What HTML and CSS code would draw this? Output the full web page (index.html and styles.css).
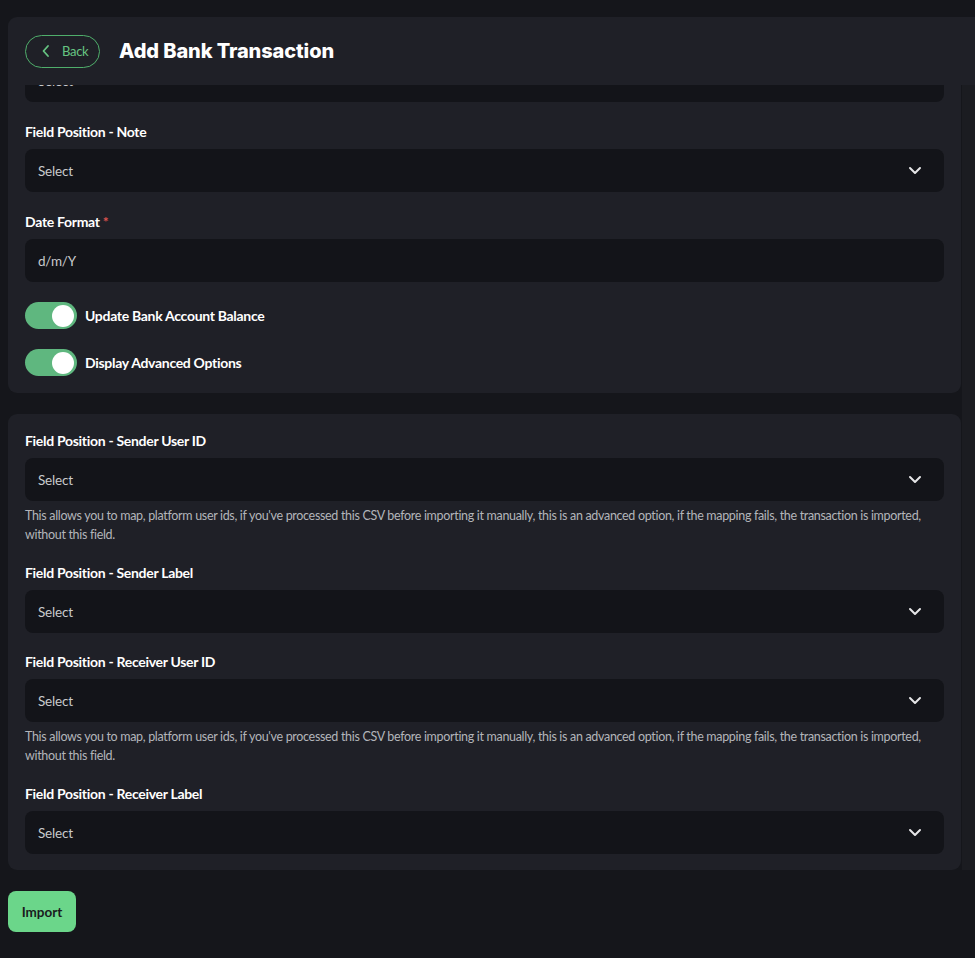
FILE: index.html
```html
<!DOCTYPE html>
<html lang="en">
<head>
<meta charset="utf-8">
<title>Add Bank Transaction</title>
<link rel="stylesheet" href="styles.css">
</head>
<body>
<div class="page">
  <header class="topbar">
    <button class="back-btn" type="button">
      <svg class="back-icon" width="10" height="14" viewBox="0 0 10 14" aria-hidden="true"><path d="M7 2 L2.5 7 L7 12" fill="none" stroke="currentColor" stroke-width="1.8" stroke-linecap="round" stroke-linejoin="round"/></svg>
      <span>Back</span>
    </button>
    <h1 class="title">Add Bank Transaction</h1>
  </header>

  <div class="scroll-area">
    <div class="content">
      <section class="card card-first">
        <div class="clip">
          <div class="select clipped"><span class="select-text">Select</span><svg class="chev" width="14" height="9" viewBox="0 0 14 9"><path d="M2 2 L7 7 L12 2" fill="none" stroke="currentColor" stroke-width="2" stroke-linecap="round" stroke-linejoin="round"/></svg></div>
        </div>

        <div class="field">
          <label class="label">Field Position - Note</label>
          <div class="select"><span class="select-text">Select</span><svg class="chev" width="14" height="9" viewBox="0 0 14 9"><path d="M2 2 L7 7 L12 2" fill="none" stroke="currentColor" stroke-width="2" stroke-linecap="round" stroke-linejoin="round"/></svg></div>
        </div>

        <div class="field">
          <label class="label">Date Format <span class="req">*</span></label>
          <div class="select"><span class="select-text">d/m/Y</span></div>
        </div>

        <div class="toggles">
          <div class="toggle-row">
            <span class="toggle"><span class="knob"></span></span>
            <span class="toggle-label">Update Bank Account Balance</span>
          </div>
          <div class="toggle-row">
            <span class="toggle"><span class="knob"></span></span>
            <span class="toggle-label">Display Advanced Options</span>
          </div>
        </div>
      </section>

      <section class="card card-second">
        <div class="field">
          <label class="label">Field Position - Sender User ID</label>
          <div class="select"><span class="select-text">Select</span><svg class="chev" width="14" height="9" viewBox="0 0 14 9"><path d="M2 2 L7 7 L12 2" fill="none" stroke="currentColor" stroke-width="2" stroke-linecap="round" stroke-linejoin="round"/></svg></div>
          <p class="help">This allows you to map, platform user ids, if you've processed this CSV before importing it manually, this is an advanced option, if the mapping fails, the transaction is imported, without this field.</p>
        </div>

        <div class="field">
          <label class="label">Field Position - Sender Label</label>
          <div class="select"><span class="select-text">Select</span><svg class="chev" width="14" height="9" viewBox="0 0 14 9"><path d="M2 2 L7 7 L12 2" fill="none" stroke="currentColor" stroke-width="2" stroke-linecap="round" stroke-linejoin="round"/></svg></div>
        </div>

        <div class="field">
          <label class="label">Field Position - Receiver User ID</label>
          <div class="select"><span class="select-text">Select</span><svg class="chev" width="14" height="9" viewBox="0 0 14 9"><path d="M2 2 L7 7 L12 2" fill="none" stroke="currentColor" stroke-width="2" stroke-linecap="round" stroke-linejoin="round"/></svg></div>
          <p class="help">This allows you to map, platform user ids, if you've processed this CSV before importing it manually, this is an advanced option, if the mapping fails, the transaction is imported, without this field.</p>
        </div>

        <div class="field">
          <label class="label">Field Position - Receiver Label</label>
          <div class="select"><span class="select-text">Select</span><svg class="chev" width="14" height="9" viewBox="0 0 14 9"><path d="M2 2 L7 7 L12 2" fill="none" stroke="currentColor" stroke-width="2" stroke-linecap="round" stroke-linejoin="round"/></svg></div>
        </div>
      </section>
    </div>
    <div class="scrollbar"></div>
  </div>

  <div class="actions">
    <button class="import-btn" type="button">Import</button>
  </div>
</div>
</body>
</html>
```

FILE: styles.css
```css
* { box-sizing: border-box; }

html, body {
  margin: 0;
  padding: 0;
  background: #15161b;
}

body {
  font-family: Lato, "Noto Sans", "Liberation Sans", sans-serif;
  color: #ffffff;
  overflow: hidden;
}

.page {
  padding: 17px 0 0 8px;
  width: 975px;
}

.topbar {
  height: 68px;
  background: #1f2027;
  border-radius: 9px 0 0 0;
  display: flex;
  align-items: center;
  padding-left: 17px;
  gap: 19px;
}

.back-btn {
  display: flex;
  align-items: center;
  gap: 11px;
  height: 33px;
  width: 75px;
  padding: 0 0 0 15px;
  border: 1.5px solid #4fae6b;
  border-radius: 17px;
  background: transparent;
  color: #66c482;
  font-family: Lato, "Noto Sans", sans-serif;
  font-size: 13px;
  letter-spacing: -0.3px;
  cursor: pointer;
}

.back-icon { display: block; }

.title {
  margin: 0;
  font-family: Inter, Lato, sans-serif;
  font-size: 20px;
  font-weight: 800;
  letter-spacing: -0.1px;
  color: #ffffff;
}

.scroll-area {
  display: flex;
}

.content {
  width: 954px;
  display: flex;
  flex-direction: column;
  gap: 21px;
}

.scrollbar {
  width: 13px;
  margin-left: 1px;
  background: #1b1c21;
}

.card {
  background: #1f2027;
  padding: 0 17px;
  display: flex;
  flex-direction: column;
}

.card-first {
  border-radius: 0 0 9px 9px;
  padding-bottom: 17px;
  gap: 22px;
}

.card-second {
  border-radius: 9px;
  padding-top: 19px;
  padding-bottom: 16px;
  gap: 21px;
}

.clip {
  height: 17px;
  overflow: hidden;
}

.clipped { margin-top: -26px; }

.field {
  display: flex;
  flex-direction: column;
}

.label {
  display: block;
  font-size: 14px;
  font-weight: 700;
  line-height: 16px;
  letter-spacing: -0.3px;
  margin-bottom: 9px;
  color: #ffffff;
}

.req { color: #d9534f; }

.select {
  height: 43px;
  background: #131419;
  border-radius: 8px;
  display: flex;
  align-items: center;
  justify-content: space-between;
  padding: 0 22px 0 13px;
  color: #c9cacd;
}

.select-text {
  font-size: 13.5px;
  letter-spacing: -0.2px;
}

.chev {
  color: #e6e6e8;
  display: block;
}

.help {
  margin: 5px 0 0;
  font-size: 12.5px;
  line-height: 19px;
  letter-spacing: -0.32px;
  color: #b3b5ba;
}

.toggles {
  display: flex;
  flex-direction: column;
  gap: 20px;
  margin-top: -2px;
}

.toggle-row {
  display: flex;
  align-items: center;
  gap: 8px;
}

.toggle {
  width: 52px;
  height: 27px;
  border-radius: 14px;
  background: #5fb77f;
  display: flex;
  align-items: center;
  justify-content: flex-end;
  padding-right: 3px;
}

.knob {
  width: 22px;
  height: 22px;
  border-radius: 50%;
  background: #ffffff;
}

.toggle-label {
  font-size: 14px;
  font-weight: 700;
  letter-spacing: -0.3px;
}

.actions {
  padding-top: 21px;
}

.import-btn {
  width: 68px;
  height: 41px;
  border: none;
  border-radius: 8px;
  background: #6bd68a;
  color: #1a1c1e;
  font-family: Lato, "Noto Sans", sans-serif;
  font-size: 13.5px;
  font-weight: 700;
  cursor: pointer;
}
```
